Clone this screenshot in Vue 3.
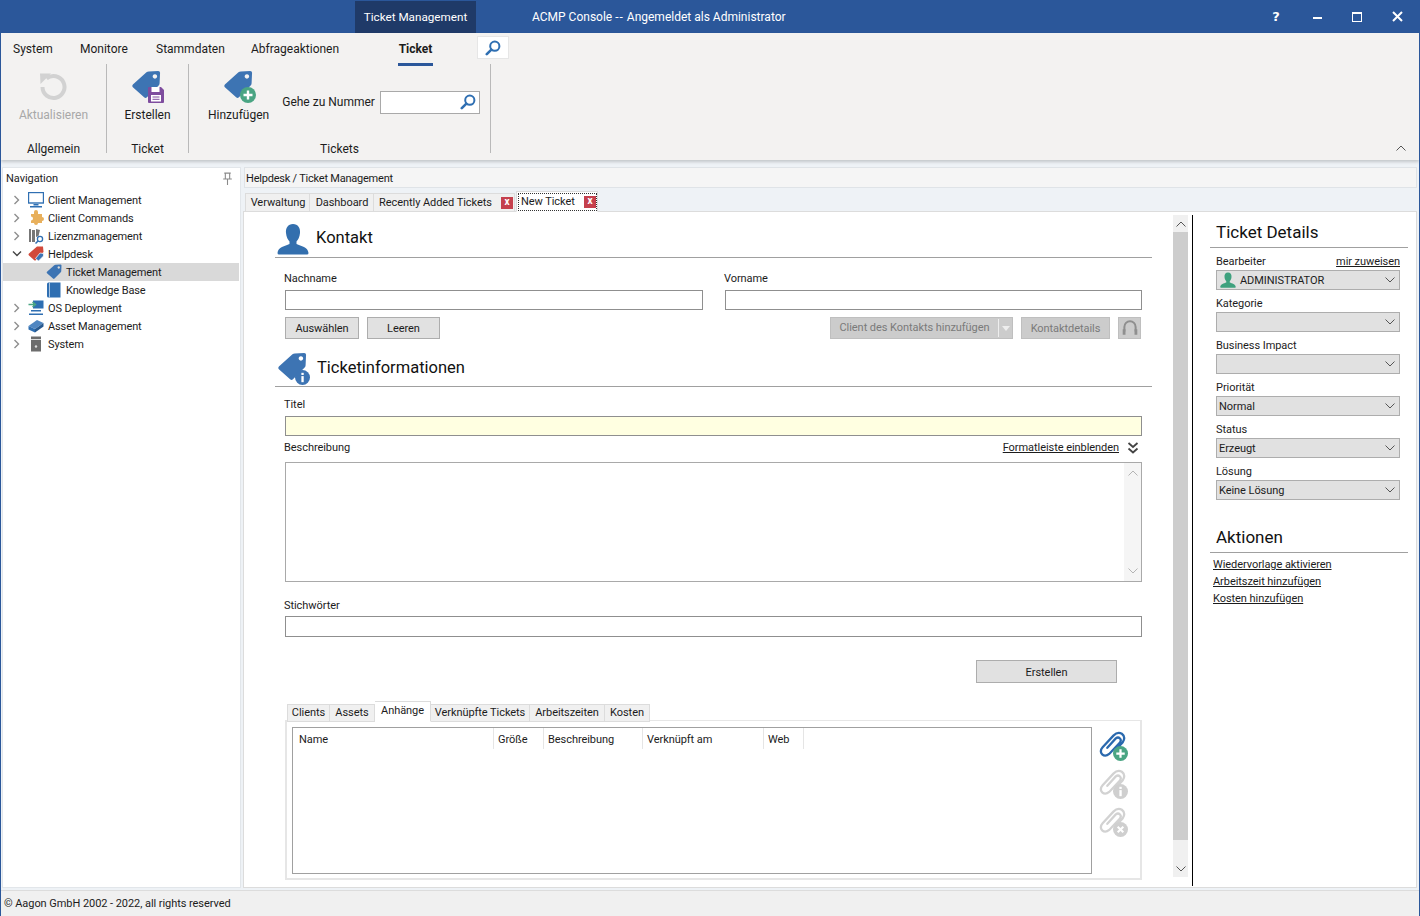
<script setup>
const menuTabs = [
  { label: 'System', width: 67 },
  { label: 'Monitore', width: 76 },
  { label: 'Stammdaten', width: 95 },
  { label: 'Abfrageaktionen', width: 147 }
]

const tree = [
  { label: 'Client Management', icon: 'monitor', arrow: 'closed' },
  { label: 'Client Commands', icon: 'puzzle', arrow: 'closed' },
  { label: 'Lizenzmanagement', icon: 'license', arrow: 'closed' },
  { label: 'Helpdesk', icon: 'helpdesk', arrow: 'open' },
  { label: 'Ticket Management', icon: 'tagsmall', child: true, selected: true },
  { label: 'Knowledge Base', icon: 'book', child: true },
  { label: 'OS Deployment', icon: 'deploy', arrow: 'closed' },
  { label: 'Asset Management', icon: 'asset', arrow: 'closed' },
  { label: 'System', icon: 'server', arrow: 'closed' }
]

const docTabs = [
  { label: 'Verwaltung', width: 65 },
  { label: 'Dashboard', width: 64 },
  { label: 'Recently Added Tickets', width: 141, close: true },
  { label: 'New Ticket', width: 82, close: true, active: true }
]

const subTabs = [
  { label: 'Clients', width: 43 },
  { label: 'Assets', width: 45 },
  { label: 'Anhänge', width: 56, active: true },
  { label: 'Verknüpfte Tickets', width: 99 },
  { label: 'Arbeitszeiten', width: 75 },
  { label: 'Kosten', width: 45 }
]

const columns = [
  { label: 'Name', width: 201 },
  { label: 'Größe', width: 50 },
  { label: 'Beschreibung', width: 99 },
  { label: 'Verknüpft am', width: 121 },
  { label: 'Web', width: 40 }
]

const details = [
  { label: 'Bearbeiter', value: 'ADMINISTRATOR', user: true, assign: true },
  { label: 'Kategorie', value: '' },
  { label: 'Business Impact', value: '' },
  { label: 'Priorität', value: 'Normal' },
  { label: 'Status', value: 'Erzeugt' },
  { label: 'Lösung', value: 'Keine Lösung' }
]

const actions = ['Wiedervorlage aktivieren', 'Arbeitszeit hinzufügen', 'Kosten hinzufügen']
</script>

<template>
  <div class="app">
    <svg class="defs" aria-hidden="true">
      <symbol id="tag" viewBox="0 0 32 32">
        <path d="M19 1.5 L29 1 Q31 1 31 3 L30.5 14 Q30.5 15.5 29.5 16.5 L17 29 Q15.5 30.5 14 29 L2 18.5 Q0.5 17 2 15.5 L16.5 2.5 Q17.5 1.5 19 1.5 Z M25.5 4.5 a2.4 2.4 0 1 0 0.01 0 Z" fill="#3d74b3" fill-rule="evenodd" />
      </symbol>
      <symbol id="clip" viewBox="0 0 32 32">
        <path d="M11 19 L20 9 Q22.5 7 24.5 9 Q26.5 11 24 14 L13 25.5 Q9 29 5.5 26 Q2.5 22.5 6 18.5 L17.5 6 Q22 1.5 26.5 4 Q31 7.5 27.5 13 L21 20" fill="none" stroke="currentColor" stroke-width="2.4" stroke-linecap="round" />
      </symbol>
      <symbol id="lens" viewBox="0 0 16 16">
        <circle cx="9.8" cy="6.2" r="4.6" fill="none" stroke="#2f6fb2" stroke-width="2" />
        <path d="M6.4 9.6 L1.8 14.2" stroke="#2f6fb2" stroke-width="2.6" stroke-linecap="round" />
      </symbol>
      <symbol id="chev" viewBox="0 0 12 8">
        <path d="M1.5 1.5 L6 6 L10.5 1.5" fill="none" stroke="#555" stroke-width="1" />
      </symbol>
      <symbol id="person" viewBox="0 0 32 32">
        <path d="M16 1 C21 1 23.5 5 23 10 C22.7 14 21 17 19.5 18.5 L19.5 21 C24 23 31 24 31.500 30 Q31.500 31.500 30 31.500 L2 31.500 Q0.500 31.500 0.500 30 C1 24 8 23 12.500 21 L12.500 18.500 C11 17 9.300 14 9 10 C8.500 5 11 1 16 1 Z" fill="currentColor" />
      </symbol>
    </svg>

    <header class="titlebar">
      <div class="context-tab">Ticket Management</div>
      <div class="app-title">ACMP Console <span class="dashes">--</span> Angemeldet als Administrator</div>
      <div class="win-buttons">
        <span class="win-btn help">?</span>
        <span class="win-btn"><i class="win-min"></i></span>
        <span class="win-btn"><i class="win-max"></i></span>
        <span class="win-btn">
          <svg width="11" height="11" viewBox="0 0 11 11"><path d="M1 1 L10 10 M10 1 L1 10" stroke="#fff" stroke-width="2" /></svg>
        </span>
      </div>
    </header>

    <section class="ribbon">
      <nav class="menu">
        <span v-for="tab in menuTabs" :key="tab.label" class="menu-item" :style="{ width: tab.width + 'px' }">{{ tab.label }}</span>
        <span class="menu-item active">Ticket</span>
        <span class="menu-search"><svg width="16" height="16"><use href="#lens" /></svg></span>
      </nav>
      <div class="groups">
        <div class="group g-general">
          <div class="group-body">
            <div class="big-btn disabled">
              <svg width="32" height="32" viewBox="0 0 32 32">
                <path d="M9.500 8.500 A11 11 0 1 1 5.500 17" fill="none" stroke="#d2d2d2" stroke-width="4" />
                <path d="M3 3.500 L14 3.500 L3.500 14 Z" fill="#d2d2d2" />
              </svg>
              <span>Aktualisieren</span>
            </div>
          </div>
          <div class="group-label">Allgemein</div>
        </div>
        <div class="group g-ticket">
          <div class="group-body">
            <div class="big-btn">
              <span class="icon-wrap">
                <svg width="30" height="30"><use href="#tag" /></svg>
                <svg class="badge" width="16" height="16" viewBox="0 0 16 16">
                  <path d="M0 1 Q0 0 1 0 L13 0 L16 3 L16 15 Q16 16 15 16 L1 16 Q0 16 0 15 Z" fill="#7e4d9e" />
                  <rect x="3.500" y="0" width="8" height="5" fill="#fff" />
                  <rect x="3" y="8" width="10" height="6.500" fill="#fff" />
                  <path d="M4.500 10 H11.500 M4.500 12.300 H11.500" stroke="#7e4d9e" stroke-width="1" />
                </svg>
              </span>
              <span>Erstellen</span>
            </div>
          </div>
          <div class="group-label">Ticket</div>
        </div>
        <div class="group g-tickets">
          <div class="group-body tickets-body">
            <div class="big-btn">
              <span class="icon-wrap">
                <svg width="30" height="30"><use href="#tag" /></svg>
                <svg class="badge" width="16" height="16" viewBox="0 0 16 16">
                  <circle cx="8" cy="8" r="8" fill="#4aa583" />
                  <path d="M8 3.500 V12.500 M3.500 8 H12.500" stroke="#fff" stroke-width="2.400" />
                </svg>
              </span>
              <span>Hinzufügen</span>
            </div>
            <label class="goto">
              <span>Gehe zu Nummer</span>
              <span class="goto-input"><svg width="16" height="16"><use href="#lens" /></svg></span>
            </label>
          </div>
          <div class="group-label">Tickets</div>
        </div>
        <div class="collapse">
          <svg width="12" height="8"><use href="#chev" transform="rotate(180 6 4)" /></svg>
        </div>
      </div>
    </section>

    <main class="main">
      <aside class="nav-panel">
        <div class="nav-head">
          <span>Navigation</span>
          <svg width="13" height="13" viewBox="0 0 12 12">
            <path d="M3 1 H9 M4 1 V6 M8 1 V6 M2 6.500 H10 M6 7 V12" fill="none" stroke="#8a8a8a" stroke-width="1" />
          </svg>
        </div>
        <ul class="tree">
          <li v-for="item in tree" :key="item.label" class="tree-row" :class="{ selected: item.selected, child: item.child }">
            <span v-if="!item.child" class="tree-arrow">
              <svg v-if="item.arrow === 'closed'" width="8" height="10" viewBox="0 0 8 10"><path d="M1.500 1 L5.500 5 L1.500 9" fill="none" stroke="#8e8e8e" stroke-width="1.400" /></svg>
              <svg v-else width="10" height="8" viewBox="0 0 10 8"><path d="M1 1.500 L5 5.500 L9 1.500" fill="none" stroke="#444" stroke-width="1.400" /></svg>
            </span>
            <span class="tree-icon">
              <svg v-if="item.icon === 'monitor'" width="16" height="16" viewBox="0 0 16 16">
                <rect x="0.500" y="0.500" width="15" height="10.500" fill="#fff" stroke="#2f6fb2" stroke-width="1.400" />
                <path d="M5.500 12 H10.500 V13.500 H5.500 Z M2 14 H14 V15.500 H2 Z" fill="#2f6fb2" />
              </svg>
              <svg v-else-if="item.icon === 'puzzle'" width="16" height="16" viewBox="0 0 16 16">
                <path d="M6 2 a2 2 0 0 1 4 0 L10 4 L14 4 L14 7 a2 2 0 0 1 0 4 L14 13 L10 13 a2 2 0 0 1 -4 0 L3 13 L3 10.500 a2 2 0 0 0 0 -4 L3 4 L6 4 Z" fill="#e8b05c" />
              </svg>
              <svg v-else-if="item.icon === 'license'" width="16" height="16" viewBox="0 0 16 16">
                <path d="M1 1 H3 V14 H1 Z M4 2 H7 V14 H4 Z M8 1 L12 2 L10.500 8 L8 9 Z" fill="#777" />
                <circle cx="12" cy="11" r="2.600" fill="#fff" stroke="#2f6fb2" stroke-width="1.300" />
                <path d="M10 13 L7.500 15.500" stroke="#2f6fb2" stroke-width="1.500" />
              </svg>
              <svg v-else-if="item.icon === 'helpdesk'" width="16" height="16" viewBox="0 0 16 16">
                <path d="M9 0.500 L15 0.500 L15.500 6 L8 14 Q7 15 6 14 L1 9.500 Q0 8.500 1 7.500 Z" fill="#d2493a" />
                <path d="M12 7 L15.500 7.500 L15.500 10 L10.500 15 L7.500 12.500 Z" fill="#3d74b3" stroke="#fff" stroke-width="0.700" />
              </svg>
              <svg v-else-if="item.icon === 'tagsmall'" width="16" height="16"><use href="#tag" /></svg>
              <svg v-else-if="item.icon === 'book'" width="16" height="16" viewBox="0 0 16 16">
                <path d="M1 2 Q1 0.500 2.500 0.500 L14.500 0.500 L14.500 15.500 L2.500 15.500 Q1 15.500 1 14 Z" fill="#2f6fb2" />
                <path d="M3.500 0.500 V15.500" stroke="#a9c6e4" stroke-width="1" />
              </svg>
              <svg v-else-if="item.icon === 'deploy'" width="16" height="16" viewBox="0 0 16 16">
                <rect x="5" y="0.500" width="10.500" height="8" fill="#2f6fb2" />
                <path d="M3 10 H13 V11.500 H3 Z M1 13.500 H15 V15 H1 Z" fill="#2f6fb2" />
                <path d="M0.500 4.500 H7 M4.500 2 L7.500 4.500 L4.500 7" fill="none" stroke="#4aa583" stroke-width="1.500" />
              </svg>
              <svg v-else-if="item.icon === 'asset'" width="16" height="16" viewBox="0 0 16 16">
                <path d="M0.500 8 L9 2 L15.500 5 L7 11 Z" fill="#4f86c1" />
                <path d="M0.500 8 L7 11 L7 14.500 L0.500 11.500 Z" fill="#2f6fb2" />
                <path d="M7 11 L15.500 5 L15.500 8.500 L7 14.500 Z" fill="#27598f" />
              </svg>
              <svg v-else width="16" height="16" viewBox="0 0 16 16">
                <rect x="3" y="0.500" width="10" height="15" fill="#6d6d6d" />
                <path d="M3 3.500 H13" stroke="#ddd" stroke-width="1" />
                <circle cx="8" cy="10.500" r="1.200" fill="#ddd" />
              </svg>
            </span>
            <span class="tree-label">{{ item.label }}</span>
          </li>
        </ul>
      </aside>

      <div class="work">
        <div class="crumb">Helpdesk / Ticket Management</div>
        <div class="doc-tabs">
          <div v-for="tab in docTabs" :key="tab.label" class="doc-tab" :class="{ active: tab.active }" :style="{ width: tab.width + 'px' }">
            <div class="doc-tab-inner" :class="{ closable: tab.close }">
              <span>{{ tab.label }}</span>
              <span v-if="tab.close" class="tab-close">x</span>
            </div>
          </div>
        </div>

        <div class="doc">
          <div class="form">
            <div class="section-head">
              <svg class="head-icon contact" width="32" height="32"><use href="#person" /></svg>
              <h2 class="contact-title">Kontakt</h2>
            </div>
            <div class="section-body">
              <div class="two-col">
                <div class="col">
                  <div class="lbl first">Nachname</div>
                  <div class="input"></div>
                </div>
                <div class="col">
                  <div class="lbl first">Vorname</div>
                  <div class="input"></div>
                </div>
              </div>
              <div class="contact-buttons">
                <button class="btn w74">Auswählen</button>
                <button class="btn w73">Leeren</button>
                <span class="spacer"></span>
                <button class="btn off split">
                  <span class="split-text">Client des Kontakts hinzufügen</span>
                  <span class="split-arrow"></span>
                </button>
                <button class="btn off w89">Kontaktdetails</button>
                <button class="btn off w23">
                  <svg width="18" height="18" viewBox="0 0 16 16">
                    <path d="M3 11 V7 A5 5 0 0 1 13 7 V11" fill="none" stroke="#8f8f8f" stroke-width="1.800" />
                    <path d="M1.500 9 H4 V14 H1.500 Z M12 9 H14.500 V14 H12 Z" fill="#8f8f8f" />
                  </svg>
                </button>
              </div>
            </div>

            <div class="section-head second">
              <span class="icon-wrap head-tag">
                <svg width="30" height="30"><use href="#tag" /></svg>
                <svg class="badge" width="15" height="15" viewBox="0 0 16 16">
                  <circle cx="8" cy="8" r="8" fill="#3d74b3" />
                  <rect x="6.800" y="6.500" width="2.500" height="6.500" fill="#fff" />
                  <rect x="6.800" y="3" width="2.500" height="2.300" fill="#fff" />
                </svg>
              </span>
              <h2>Ticketinformationen</h2>
            </div>
            <div class="section-body">
              <div class="lbl titel">Titel</div>
              <div class="input required"></div>
              <div class="lbl-row">
                <span>Beschreibung</span>
                <a class="link">Formatleiste einblenden</a>
                <svg class="dbl" width="12" height="12" viewBox="0 0 12 12">
                  <path d="M1.500 1 L6 5 L10.500 1 M1.500 6.500 L6 10.500 L10.500 6.500" fill="none" stroke="#444" stroke-width="1.800" />
                </svg>
              </div>
              <div class="textarea">
                <div class="ta-scroll">
                  <svg width="12" height="8"><use href="#chev" transform="rotate(180 6 4)" opacity="0.400" /></svg>
                  <svg width="12" height="8"><use href="#chev" opacity="0.400" /></svg>
                </div>
              </div>
              <div class="lbl stich">Stichwörter</div>
              <div class="input keywords"></div>
              <button class="btn create">Erstellen</button>

              <div class="sub-tabs">
                <div v-for="tab in subTabs" :key="tab.label" class="sub-tab" :class="{ active: tab.active }" :style="{ width: tab.width + 'px' }">{{ tab.label }}</div>
              </div>
              <div class="sub-box">
                <div class="grid-box">
                  <div class="grid-head">
                    <span v-for="col in columns" :key="col.label" class="grid-col" :style="{ width: col.width + 'px' }">{{ col.label }}</span>
                  </div>
                </div>
                <div class="clip-tools">
                  <span class="icon-wrap clip blue">
                    <svg width="30" height="30"><use href="#clip" /></svg>
                    <svg class="badge" width="15" height="15" viewBox="0 0 16 16">
                      <circle cx="8" cy="8" r="8" fill="#4aa583" />
                      <path d="M8 3.500 V12.500 M3.500 8 H12.500" stroke="#fff" stroke-width="2.400" />
                    </svg>
                  </span>
                  <span class="icon-wrap clip">
                    <svg width="30" height="30"><use href="#clip" /></svg>
                    <svg class="badge" width="15" height="15" viewBox="0 0 16 16">
                      <circle cx="8" cy="8" r="8" fill="#cfcfcf" />
                      <rect x="6.800" y="6.500" width="2.500" height="6.500" fill="#fff" />
                      <rect x="6.800" y="3" width="2.500" height="2.300" fill="#fff" />
                    </svg>
                  </span>
                  <span class="icon-wrap clip">
                    <svg width="30" height="30"><use href="#clip" /></svg>
                    <svg class="badge" width="15" height="15" viewBox="0 0 16 16">
                      <circle cx="8" cy="8" r="8" fill="#cfcfcf" />
                      <path d="M5 5 L11 11 M11 5 L5 11" stroke="#fff" stroke-width="2.200" />
                    </svg>
                  </span>
                </div>
              </div>
            </div>
          </div>

          <div class="scrollbar">
            <span class="sb-btn"><svg width="12" height="8"><use href="#chev" transform="rotate(180 6 4)" /></svg></span>
            <span class="sb-thumb"></span>
            <span class="sb-track"></span>
            <span class="sb-btn"><svg width="12" height="8"><use href="#chev" /></svg></span>
          </div>

          <aside class="side">
            <h2 class="side-title">Ticket Details</h2>
            <div v-for="field in details" :key="field.label" class="side-field">
              <div class="side-label">
                <span>{{ field.label }}</span>
                <a v-if="field.assign" class="link">mir zuweisen</a>
              </div>
              <div class="select">
                <svg v-if="field.user" class="select-user" width="16" height="16"><use href="#person" /></svg>
                <span>{{ field.value }}</span>
                <svg class="select-chev" width="12" height="8"><use href="#chev" /></svg>
              </div>
            </div>
            <h2 class="side-title actions">Aktionen</h2>
            <div class="action-list">
              <a v-for="action in actions" :key="action" class="link">{{ action }}</a>
            </div>
          </aside>
        </div>
      </div>
    </main>

    <footer class="status">© Aagon GmbH 2002 - 2022, all rights reserved</footer>
  </div>
</template>

<style scoped>
* {
  box-sizing: border-box;
}

.defs {
  display: block;
  width: 0;
  height: 0;
  flex: none;
}

.app {
  width: 1420px;
  height: 916px;
  display: flex;
  flex-direction: column;
  overflow: hidden;
  background: #f0f0f0;
  border-left: 1px solid #2b579a;
  border-right: 1px solid #2b579a;
  font-family: Roboto, "Liberation Sans", sans-serif;
  font-size: 11px;
  letter-spacing: -0.06px;
  color: #1c1c1c;
  white-space: nowrap;
}

.titlebar {
  height: 33px;
  flex: none;
  margin: 0 -1px;
  padding-left: 355px;
  display: flex;
  background: #2b579a;
  color: #fff;
  letter-spacing: 0;
}

.context-tab {
  width: 121px;
  margin-top: 1px;
  background: #1f3a68;
  display: flex;
  align-items: center;
  justify-content: center;
  font-size: 11.7px;
}

.app-title {
  margin-left: 56px;
  line-height: 34px;
  font-size: 12px;
}

.dashes {
  letter-spacing: 1px;
}

.win-buttons {
  margin-left: auto;
  display: flex;
  padding-right: 3px;
}

.win-btn {
  width: 40px;
  display: flex;
  align-items: center;
  justify-content: center;
}

.win-btn.help {
  margin-right: 1px;
  font-family: "DejaVu Sans", sans-serif;
  font-weight: 700;
  font-size: 13px;
}

.win-min {
  display: block;
  width: 9px;
  height: 2px;
  background: #fff;
  margin-top: 3px;
}

.win-max {
  display: block;
  width: 10px;
  height: 10px;
  border: 1px solid #fff;
  border-top-width: 2px;
}

.ribbon {
  height: 127px;
  flex: none;
  background: #f3f2f1;
  box-shadow: 0 2px 3px rgba(0, 0, 0, 0.18);
  position: relative;
  z-index: 1;
  font-size: 12px;
  letter-spacing: 0;
}

.menu {
  height: 29px;
  display: flex;
  padding-left: 12px;
  padding-top: 3px;
}

.menu-item {
  line-height: 26px;
}

.menu-item.active {
  width: 35px;
  height: 30px;
  font-weight: 700;
  border-bottom: 3px solid #2b579a;
  text-align: center;
}

.menu-search {
  width: 32px;
  height: 23px;
  margin-left: 44px;
  background: #fff;
  border: 1px solid #e6e6e6;
  display: flex;
  align-items: center;
  justify-content: center;
}

.groups {
  height: 98px;
  display: flex;
  padding-top: 2px;
}

.group {
  height: 89px;
  display: flex;
  flex-direction: column;
  border-right: 1px solid #b9b9b9;
}

.g-general {
  width: 106px;
}

.g-ticket {
  width: 82px;
}

.g-tickets {
  width: 302px;
}

.group-body {
  flex: 1;
  display: flex;
  justify-content: center;
  padding-top: 6px;
}

.tickets-body {
  justify-content: flex-start;
  padding-left: 19px;
}

.group-label {
  height: 15px;
  margin-bottom: -4px;
  line-height: 15px;
  text-align: center;
}

.big-btn {
  display: flex;
  flex-direction: column;
  align-items: center;
  gap: 6px;
  line-height: 15px;
}

.big-btn.disabled {
  color: #a8a8a8;
}

.icon-wrap {
  position: relative;
  display: block;
  width: 32px;
  height: 32px;
}

.icon-wrap svg {
  display: block;
}

.badge {
  position: absolute;
  right: -1px;
  bottom: -1px;
}

.goto {
  margin-left: 13px;
  margin-top: 20px;
  height: 24px;
  display: flex;
  align-items: center;
  gap: 5px;
}

.goto-input {
  width: 100px;
  height: 23px;
  background: #fff;
  border: 1px solid #a9a9a9;
  display: flex;
  align-items: center;
  justify-content: flex-end;
  padding-right: 3px;
}

.collapse {
  margin-left: auto;
  margin-right: 12px;
  margin-top: 77px;
}

.main {
  flex: 1;
  min-height: 0;
  padding: 7px 2px 2px 1px;
  display: flex;
  gap: 2px;
  background: #eef2f6;
}

.nav-panel {
  width: 239px;
  flex: none;
  background: #fff;
  border: 1px solid #e2e6ea;
}

.nav-head {
  height: 21px;
  padding: 0 6px 0 3px;
  display: flex;
  align-items: center;
  justify-content: space-between;
}

.tree {
  margin: 2px 0 0;
  padding: 0;
  list-style: none;
  letter-spacing: -0.12px;
}

.tree-row {
  height: 18px;
  display: flex;
  align-items: center;
}

.tree-row.selected {
  background: #d9d9d9;
  margin-right: 1px;
}

.tree-arrow {
  width: 19px;
  margin-left: 4px;
  display: flex;
  justify-content: center;
}

.tree-arrow svg,
.tree-icon svg {
  display: block;
}

.tree-icon {
  width: 22px;
  flex: none;
  padding-left: 2px;
}

.tree-row.child .tree-icon {
  margin-left: 41px;
}

.work {
  flex: 1;
  min-width: 0;
  display: flex;
  flex-direction: column;
}

.crumb {
  height: 21px;
  margin-left: 1px;
  padding-left: 1px;
  line-height: 21px;
  letter-spacing: -0.22px;
  background: #f5f5f5;
  border: 1px solid #dfe3e7;
}

.doc-tabs {
  height: 24px;
  padding: 0 0 0 2px;
  display: flex;
  align-items: flex-end;
  position: relative;
  z-index: 1;
  margin-bottom: -1px;
}

.doc-tab {
  height: 19px;
  padding: 1px 1px 0 2px;
  background: #f0f0f0;
  border: 1px solid #dcdcdc;
  border-left-width: 0;
  line-height: 16px;
}

.doc-tab:first-child {
  border-left-width: 1px;
}

.doc-tab.active {
  height: 21px;
  margin-left: 1px;
  padding: 2px 1px 0 2px;
  background: #fff;
  border-left-width: 1px;
  border-bottom: 1px solid #fff;
}

.doc-tab-inner {
  display: flex;
  align-items: center;
  justify-content: center;
  height: 16px;
}

.doc-tab-inner.closable {
  justify-content: space-between;
  padding-left: 3px;
}

.doc-tab.active .doc-tab-inner {
  padding: 0 0 0 2px;
  outline: 1px dotted #333;
  outline-offset: 0;
}

.tab-close {
  width: 12px;
  height: 12px;
  background: #c5404d;
  color: #fff;
  font-size: 10px;
  font-weight: 700;
  line-height: 10px;
  text-align: center;
}

.doc {
  flex: 1;
  min-height: 0;
  display: flex;
  padding: 3px 0 0;
  background: #fff;
  border: 1px solid #dcdcdc;
}

.form {
  width: 929px;
  flex: none;
  padding-left: 31px;
  padding-right: 21px;
}

.section-head {
  height: 43px;
  padding: 8px 0 2px;
  display: flex;
  align-items: center;
  border-bottom: 1px solid #a0a0a0;
}

.section-head.second {
  height: 48px;
  padding-top: 12px;
}

.section-head h2 {
  margin: 0;
  font-size: 16.5px;
  font-weight: 400;
  letter-spacing: 0;
  color: #111;
}

.section-head h2.contact-title {
  margin-top: -3px;
}

.head-icon.contact {
  margin: 0 7px 0 2px;
  color: #336fae;
}

.head-tag {
  margin: 0 8px 0 2px;
}

.section-body {
  padding: 0 10px;
}

.two-col {
  display: flex;
  gap: 22px;
}

.col {
  width: 418px;
}

.col:last-child {
  width: 417px;
}

.lbl {
  height: 16px;
  line-height: 18px;
}

.lbl.first {
  margin-top: 12px;
  margin-left: -1px;
}

.input {
  height: 20px;
  margin-top: 4px;
  background: #fff;
  border: 1px solid #8f8f8f;
}

.input.required {
  background: #ffffe1;
}

.input.keywords {
  height: 21px;
  margin-top: 3px;
}

.contact-buttons {
  margin-top: 7px;
  height: 22px;
  display: flex;
  gap: 8px;
  padding-right: 1px;
}

.spacer {
  flex: 1;
}

.btn {
  height: 22px;
  padding: 0;
  font: inherit;
  letter-spacing: inherit;
  color: #1c1c1c;
  background: #e1e1e1;
  border: 1px solid #adadad;
  display: flex;
  align-items: center;
  justify-content: center;
}

.btn.off {
  background: #cccccc;
  border-color: #bfbfbf;
  color: #7a7a7a;
}

.w74 {
  width: 74px;
}

.w73 {
  width: 73px;
}

.w89 {
  width: 89px;
}

.w23 {
  width: 23px;
}

.split {
  width: 183px;
  justify-content: flex-start;
}

.split-text {
  width: 168px;
  text-align: center;
  border-right: 1px solid #eee;
  line-height: 18px;
}

.split-arrow {
  margin-left: 3px;
  border-top: 5px solid #eeeeee;
  border-left: 4px solid transparent;
  border-right: 4px solid transparent;
}

.lbl.titel {
  margin-top: 9px;
  margin-left: -1px;
}

.lbl-row {
  height: 16px;
  margin-top: 4px;
  margin-left: -1px;
  display: flex;
  align-items: center;
  line-height: 18px;
}

.lbl-row .link {
  margin-left: auto;
}

.dbl {
  margin: 0 3px 0 8px;
}

.link {
  color: #1c1c1c;
  text-decoration: underline;
}

.textarea {
  height: 120px;
  margin-top: 6px;
  border: 1px solid #a9a9a9;
  display: flex;
  justify-content: flex-end;
}

.ta-scroll {
  width: 17px;
  background: #f5f5f5;
  display: flex;
  flex-direction: column;
  justify-content: space-between;
  align-items: center;
  padding: 6px 0;
}

.ta-scroll svg {
  display: block;
}

.lbl.stich {
  margin-top: 15px;
  margin-left: -1px;
}

.btn.create {
  width: 141px;
  height: 23px;
  margin: 23px 0 0 691px;
  padding-top: 1px;
}

.sub-tabs {
  height: 21px;
  margin-top: 18px;
  padding-left: 2px;
  display: flex;
  align-items: flex-end;
  margin-bottom: -2px;
  position: relative;
  z-index: 1;
}

.sub-tab {
  height: 18px;
  line-height: 16px;
  text-align: center;
  background: #f0f0f0;
  border: 1px solid #dcdcdc;
  border-left-width: 0;
}

.sub-tab:first-child {
  border-left-width: 1px;
}

.sub-tab.active {
  height: 21px;
  background: #fff;
  border-left-width: 0;
  border-bottom: 1px solid #fff;
  line-height: 17px;
}

.sub-box {
  width: 857px;
  height: 160px;
  margin-top: 0;
  padding: 6px 6px 5px 5px;
  border: 2px solid #e6e6e6;
  border-top-width: 1px;
  display: flex;
}

.grid-box {
  width: 800px;
  height: 147px;
  border: 1px solid #a0a0a0;
}

.grid-head {
  height: 21px;
  display: flex;
}

.grid-col {
  padding-left: 4px;
  line-height: 23px;
  border-right: 1px solid #e5e5e5;
}

.grid-col:first-child {
  padding-left: 6px;
}

.clip-tools {
  margin: 3px 0 0 5px;
  display: flex;
  flex-direction: column;
  gap: 8px;
}

.icon-wrap.clip {
  width: 30px;
  height: 30px;
  color: #d2d2d2;
}

.icon-wrap.clip.blue {
  color: #2a69ae;
}

.scrollbar {
  width: 15px;
  flex: none;
  height: 662px;
  display: flex;
  flex-direction: column;
  background: #f0f0f0;
}

.sb-btn {
  height: 17px;
  flex: none;
  display: flex;
  align-items: center;
  justify-content: center;
}

.sb-thumb {
  height: 608px;
  background: #cdcdcd;
}

.sb-track {
  flex: 1;
}

.side {
  width: 224px;
  height: 671px;
  flex: none;
  margin-left: 4px;
  padding: 0 8px 0 17px;
  border-left: 1px solid #000;
}

.side-title {
  margin: 0;
  height: 33px;
  padding: 4px 0 0 6px;
  font-size: 17px;
  font-weight: 400;
  letter-spacing: 0;
  color: #111;
  line-height: 26px;
  border-bottom: 1px solid #a0a0a0;
}

.side-field {
  padding: 0 8px 0 6px;
  height: 42px;
  padding-top: 6px;
}

.side-label {
  height: 16px;
  line-height: 16px;
  display: flex;
  justify-content: space-between;
}

.select {
  height: 20px;
  display: flex;
  align-items: center;
  padding-left: 2px;
  background: #e1e1e1;
  border: 1px solid #adadad;
}

.select-user {
  margin-right: 4px;
  color: #3ea17e;
  margin-left: 1px;
}

.select-chev {
  margin-left: auto;
  margin-right: 3px;
}

.side-title.actions {
  margin-top: 20px;
}

.action-list {
  padding: 3px 0 0 3px;
  display: flex;
  flex-direction: column;
}

.action-list .link {
  height: 17px;
  line-height: 17px;
}

.status {
  height: 26px;
  flex: none;
  padding-left: 3px;
  line-height: 26px;
  background: #f0f0f0;
  border-top: 1px solid #dcdcdc;
}
</style>
